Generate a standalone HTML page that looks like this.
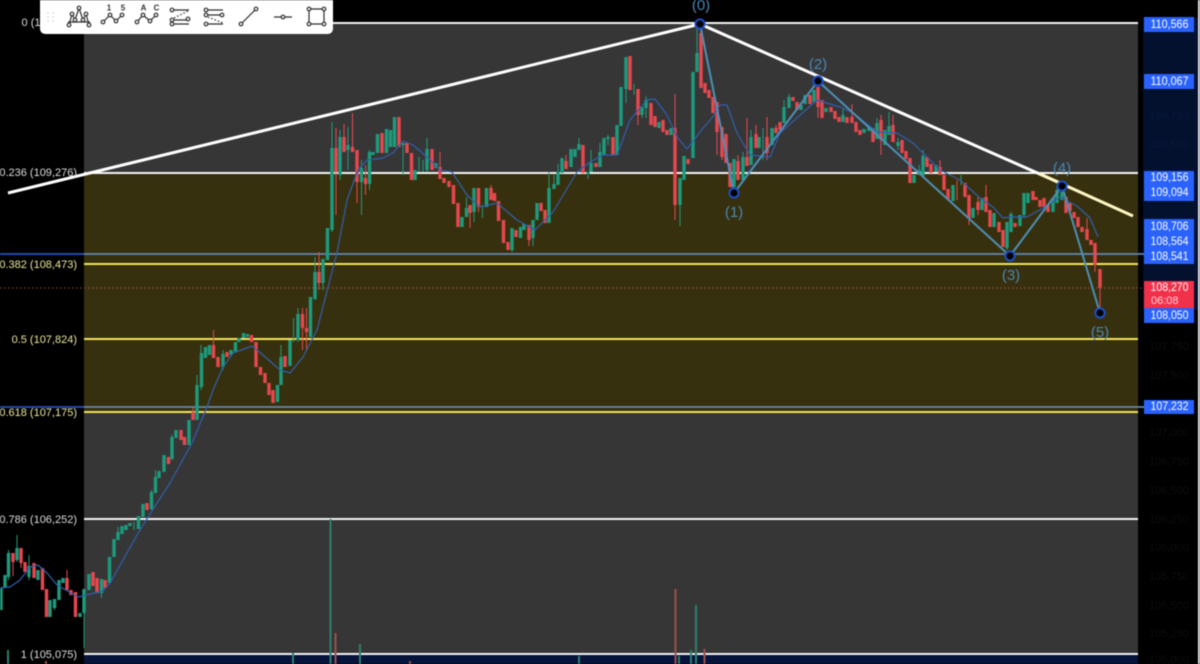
<!DOCTYPE html>
<html><head><meta charset="utf-8"><title>Chart</title>
<style>
html,body{margin:0;padding:0;background:#000;width:1200px;height:664px;overflow:hidden}
svg{display:block;filter:blur(.4px)}
text{font-family:"Liberation Sans",sans-serif}
</style></head><body>
<svg width="1200" height="664" viewBox="0 0 1200 664" xmlns="http://www.w3.org/2000/svg">
<rect width="1200" height="664" fill="#000"/>
<rect x="84" y="23" width="1054" height="632" fill="#363636"/>
<rect x="84" y="173" width="1054" height="239" fill="#37300f"/>
<rect x="84" y="655" width="1054" height="9" fill="#06133a"/>
<rect x="1143" y="18" width="55" height="292" fill="#03102e"/>
<rect x="1198" y="0" width="2" height="664" fill="#e4e4e4"/>

<!-- faint axis labels -->
<g font-size="11" fill="#0d0d0d" text-anchor="middle">
<text x="1169" y="119" fill="#0a1a3c">109,750</text><text x="1169" y="148" fill="#0a1a3c">109,500</text><text x="1169" y="350">107,750</text><text x="1169" y="379">107,500</text><text x="1169" y="436">107,000</text><text x="1169" y="465">106,750</text><text x="1169" y="494">106,500</text><text x="1169" y="523">106,250</text><text x="1169" y="551">106,000</text><text x="1169" y="580">105,750</text><text x="1169" y="609">105,500</text><text x="1169" y="637">105,250</text><text x="1169" y="663">105,000</text>
</g>

<!-- fib lines -->
<g stroke-width="2">
<path d="M84 23H1138M84 173H1138M84 519H1138M84 654H1138" stroke="#f4f4f4"/>
<path d="M84 264H1138M84 339H1138M84 412H1138" stroke="#f3e45c"/>
</g>
<path d="M0 254H84M0 407H84" stroke="#1f49b0" stroke-width="2"/>
<path d="M84 254H1144M84 407H1144" stroke="#6488b4" stroke-width="1.7"/>
<path d="M0 288H1144" stroke="#a3502f" stroke-width="1" stroke-dasharray="1.5 2.5"/>

<!-- volume -->
<g stroke-width="2" fill="none">
<path d="M330.5 519V664M293 653V664M360 644V664M579 656V664M696 605V664M691 650V664M679 656V664M8 650V664" stroke="#2f7f6e"/>
<path d="M335.5 633V664M410 661V664M675.5 589V664M704.5 649V664M46 661V664" stroke="#9c4f4f"/>
</g>

<!-- wicks green -->
<path fill="none" stroke="#1f9a7c" stroke-width="1" d="M8.5 550V580M17 535V562M29 555V580M54.5 599V610M84 589V648M101.5 579V598M118 527V540M134 522V530M151.5 490V510M155.5 470V493M172 435V460M197 375V420M201 345V390M223 350V370M281 345V385M293.5 318V342M298 308V342M315 257V300M323 259V290M332 122V232M340 130V180M348 127V170M361.5 160V215M369.5 150V190M403 143V175M419 157V172M423 160V172M427 138V172M466.5 197V217M474 188V222M482.5 205V218M486.5 188V207M512 228V252M533 220V246M549 172V223M554 175V189M558 164V185M579 138V150M588 172V179M591 150V172M600 143V167M608 135V145M626 57V103M634 84V95M642 107V118M646 96V118M680 178V226M684 156V180M697 25V72M743 152V180M751 130V165M763 128V160M784 100V123M789 94V108M843 108V122M877 118V139M889 112V135M898 138V150M919 165V175M923 150V176M961 175V185M1007 222V250M1011 212V232M1024 193V218M1057 185V203"/>
<!-- wicks red -->
<path fill="none" stroke="#e8474f" stroke-width="1" d="M13 553V576M21 548V568M67 570V590M193 408V420M213.5 330V358M302.5 308V350M306.5 308V350M319 252V290M336 128V215M344 124V152M352.5 113V152M357 150V203M365.5 165V195M440 152V179M458 203V227M470 205V228M478.5 188V212M491 185V200M529 225V246M566 155V169M638 89V125M675 94V220M701 25V88M717 102V155M722 127V160M738 155V180M747 118V166M756 125V148M767 117V160M776 125V133M818 87V118M852 104V123M881 115V155M893 115V142M940 160V175M957 180V200M978 197V215M986 185V212M1087 218V240M1095 243V272M1100 269V310M969 195V225"/>
<!-- bodies green -->
<path fill="none" stroke="#1c9b7d" stroke-width="3.4" d="M1 588V610M5 575V588M8.5 553V577M17 548V560M29 566V577M38 570V580M50 600V617M54.5 599V608M59 580V600M63 578V583M80 613V617M84 589V613M89 574V590M101.5 579V593M109.5 557V583M114 539V557M118 532V540M122 526V534M126 525V530M130 523V526M138.5 516V529M143 504V517M151.5 492V509M155.5 477V493M159 471V478M164 455V472M172 437V459M176 430V438M189 420V445M197 385V420M201.5 353V387M205.5 347V358M209.5 345V355M223 354V367M231 350V355M235.5 342V352M239 338V342M243.5 333V338M247.5 334V337M277.5 385V402M281 357V385M290 340V366M298 314V340M310.5 297V337M315 272V299M323 259V283M327.5 228V260M332 148V230M340 137V175M348 145V150M361.5 168V182M369.5 152V184M373 152V155M377.5 134V153M386.5 129V153M390.5 130V147M394.5 117V147M403 143V145M415 170V180M427 149V170M436 163V168M462 217V227M466.5 208V217M474 188V212M486.5 188V207M512 228V250M520.5 227V238M524 224V230M533 220V238M537 203V220M549 188V223M554 184V189M558 172V185M562 158V173M571 149V167M575 149V157M579 144V150M588 172V174M591 163V172M600 152V167M604 138V155M608 137V139M617 125V155M621 87V126M626 57V89M642 107V115M646 100V108M659 122V128M671 128V135M680 178V205M684 156V180M693 72V158M697 53V72M734 159V187M743 157V180M751 137V165M759 137V148M772 128V145M784 107V123M789 97V108M801 105V110M805 95V104M814 90V102M826 108V112M843 115V122M864 129V133M869 127V131M877 123V139M885 130V145M889 126V135M898 142V146M914 175V183M919 170V175M923 156V176M936 165V172M953 185V201M973 208V218M982 198V210M994 213V227M1007 222V248M1011 214V232M1020 215V226M1024 193V215M1028 193V203M1053 198V212M1057 190V203M1062 192V200"/>
<!-- bodies red -->
<path fill="none" stroke="#e8474f" stroke-width="3.4" d="M13 553V562M21 548V563M25 562V572M34 563V578M42.5 568V590M46.5 589V617M67 578V590M71 590V595M75.5 592V617M93 572V586M97 578V593M105 580V588M147 503V510M168.5 457V464M181 430V440M184.5 437V445M193 412V420M213.5 345V358M218 357V367M227 352V357M251.5 335V342M256 342V367M260.5 367V375M265 373V383M269 383V395M273 390V403M285 356V367M302.5 314V328M306.5 328V332M319 272V283M336 148V172M344 137V152M352.5 147V152M357 150V182M365.5 178V184M382 133V153M399 117V147M407 143V153M411.5 153V180M432 149V170M440 167V179M444 178V183M449 181V187M453.5 185V204M458 203V227M470 205V213M478.5 188V207M491 188V200M494.5 193V201M498.5 201V221M503.5 220V243M508 242V250M516 230V237M529 225V240M541 203V211M545 210V223M566 161V169M583 145V173M596 163V167M613 137V155M630 56V90M638 89V115M651 103V125M655 116V127M663 120V132M667 130V135M675 128V205M688 159V164M701 33V88M705 83V93M709 90V98M713 97V113M717 102V132M722 127V157M726 134V163M730 163V187M738 161V180M747 157V166M756 134V148M767 137V153M776 128V133M780 122V130M793 97V101M797 102V110M810 95V104M818 87V107M822 100V118M831 107V112M835 111V119M839 117V122M847 117V123M852 117V123M856 122V132M860 130V135M873 128V142M881 120V140M893 125V142M902 140V153M906 151V159M910 158V183M927 157V167M931 164V173M940 167V175M944 175V190M948 189V200M965 183V197M969 195V218M978 202V210M986 197V212M990 210V227M999 222V232M1003 230V247M1015 223V227M1033 191V200M1036 197V200M1040 200V207M1044 198V207M1048 205V212M1066 197V213M1070 203V211M1074 212V218M1078 217V227M1082 227V232M1087 229V240M1091 240V245M1095 243V265M1100 269V288"/>

<!-- moving average -->
<polyline fill="none" stroke="#2f5fae" stroke-width="1.2" stroke-linejoin="round" points="0,588 10,587 20,580 30,567 38,565 47,573 57,585 78,597 103,591 110,583 123,560 140,530 157,503 170,483 192,443 207,407 213,390 223,367 233,353 252,346 263,355 280,370 290,373 303,357 317,330 328,287 337,253 347,200 358,170 367,160 383,158 393,153 403,141 413,145 427,157 440,170 452,172 467,195 480,207 497,203 517,220 535,230 553,212 577,172 590,162 603,155 617,155 630,120 647,100 655,99 667,115 677,137 687,149 703,128 712,118 720,105 727,105 737,133 750,155 770,157 780,133 817,100 840,107 853,113 877,132 897,133 913,143 923,153 940,170 960,180 980,198 993,207 1003,218 1013,217 1027,217 1043,208 1060,197 1077,206 1090,218 1098,237"/>

<!-- trend lines -->
<path d="M8 193L700 24L1060 183" fill="none" stroke="#fff" stroke-width="3"/>
<path d="M1040 174L1133 216" fill="none" stroke="#fff6c4" stroke-width="3"/>

<!-- elliott wave -->
<polyline fill="none" stroke="#4d8fb6" stroke-width="2" stroke-linejoin="round" points="700,24 734,193 818,81 1010,256 1062,186 1100,313"/>
<g fill="#000" stroke="#1c4fc4" stroke-width="2">
<circle cx="700" cy="24" r="4.6"/><circle cx="734" cy="193" r="4.6"/><circle cx="818" cy="81" r="4.6"/><circle cx="1010" cy="256" r="4.6"/><circle cx="1062" cy="186" r="4.6"/><circle cx="1100" cy="313" r="4.6"/>
</g>
<g font-size="15" fill="#4a86b2" text-anchor="middle">
<text x="701" y="10">(0)</text><text x="734" y="217">(1)</text><text x="818" y="69">(2)</text><text x="1011" y="280">(3)</text><text x="1062" y="173">(4)</text><text x="1100" y="337">(5)</text>
</g>

<!-- left fib labels -->
<g font-size="11" text-anchor="end">
<text x="77" y="26" fill="#ddd">0 (110,566)</text>
<text x="77" y="176" fill="#ddd">0.236 (109,276)</text>
<text x="77" y="268" fill="#ece79a">0.382 (108,473)</text>
<text x="77" y="343" fill="#ece79a">0.5 (107,824)</text>
<text x="77" y="416" fill="#ece79a">0.618 (107,175)</text>
<text x="77" y="523" fill="#ddd">0.786 (106,252)</text>
<text x="77" y="658" fill="#ddd">1 (105,075)</text>
</g>

<!-- axis labels -->
<g fill="#2962ff">
<rect x="1144" y="17" width="50" height="15"/><rect x="1144" y="74" width="50" height="15"/><rect x="1144" y="171" width="50" height="30"/><rect x="1144" y="219" width="50" height="45"/><rect x="1144" y="308" width="50" height="15"/><rect x="1144" y="400" width="50" height="14"/>
</g>
<rect x="1144" y="281" width="50" height="27" fill="#f1304a"/>
<g font-size="11.5" fill="#fff" text-anchor="middle">
<text x="1169.5" y="28" textLength="38" lengthAdjust="spacingAndGlyphs">110,566</text><text x="1169.5" y="85" textLength="38" lengthAdjust="spacingAndGlyphs">110,067</text><text x="1169.5" y="181" textLength="38" lengthAdjust="spacingAndGlyphs">109,156</text><text x="1169.5" y="196" textLength="38" lengthAdjust="spacingAndGlyphs">109,094</text><text x="1169.5" y="230" textLength="38" lengthAdjust="spacingAndGlyphs">108,706</text><text x="1169.5" y="245" textLength="38" lengthAdjust="spacingAndGlyphs">108,564</text><text x="1169.5" y="260" textLength="38" lengthAdjust="spacingAndGlyphs">108,541</text><text x="1169.5" y="291" textLength="38" lengthAdjust="spacingAndGlyphs">108,270</text><text x="1169.5" y="319" textLength="38" lengthAdjust="spacingAndGlyphs">108,050</text><text x="1169.5" y="410" textLength="38" lengthAdjust="spacingAndGlyphs">107,232</text>
</g>
<text x="1151" y="304" font-size="11" fill="#ffd3d8">06:08</text>

<!-- toolbar -->
<path d="M40 0H333V28Q333 34 327 34H46Q40 34 40 28Z" fill="#fff"/>
<g fill="#ccc"><circle cx="48" cy="13" r=".8"/><circle cx="53" cy="13" r=".8"/><circle cx="48" cy="17" r=".8"/><circle cx="53" cy="17" r=".8"/><circle cx="48" cy="21" r=".8"/><circle cx="53" cy="21" r=".8"/></g>
<g fill="#fff" stroke="#2e2e2e" stroke-width="1.2">
<path fill="none" d="M69 25L72 14L75 20L79 8L83 20L86 14L89 25M68 22H90"/>
<circle cx="69" cy="25" r="1.8"/><circle cx="72" cy="14" r="1.8"/><circle cx="75" cy="20" r="1.8"/><circle cx="79" cy="8" r="1.8"/><circle cx="83" cy="20" r="1.8"/><circle cx="86" cy="14" r="1.8"/><circle cx="89" cy="25" r="1.8"/>
<path fill="none" d="M103 22L110 15L116 21L122 15"/>
<circle cx="103" cy="22" r="1.8"/><circle cx="110" cy="15" r="1.8"/><circle cx="116" cy="21" r="1.8"/><circle cx="122" cy="15" r="1.8"/>
<path fill="none" d="M137 22L143 15L150 21L156 15"/>
<circle cx="137" cy="22" r="1.8"/><circle cx="143" cy="15" r="1.8"/><circle cx="150" cy="21" r="1.8"/><circle cx="156" cy="15" r="1.8"/>
<path fill="none" d="M172 10H189M172 20H188M172 24H189"/>
<path fill="none" stroke-dasharray="1.5 2" d="M174 18L188 11"/>
<circle cx="172" cy="10" r="1.8"/><circle cx="172" cy="20" r="1.8"/><circle cx="188" cy="19" r="1.8"/><circle cx="172" cy="24" r="1.8"/>
<path fill="none" d="M206 10H223M206 15H222M206 24H223"/>
<path fill="none" stroke-dasharray="1.5 2" d="M208 17L223 23"/>
<circle cx="206" cy="10" r="1.8"/><circle cx="206" cy="15" r="1.8"/><circle cx="222" cy="15" r="1.8"/><circle cx="206" cy="24" r="1.8"/>
<path fill="none" d="M241 24L256 9"/>
<circle cx="241" cy="24" r="1.8"/><circle cx="256" cy="9" r="1.8"/>
<path fill="none" d="M274 17H292"/>
<circle cx="283" cy="17" r="1.8"/>
<path fill="none" d="M309 9H324V24H309Z"/>
<circle cx="309" cy="9" r="1.8"/><circle cx="324" cy="9" r="1.8"/><circle cx="309" cy="24" r="1.8"/><circle cx="324" cy="24" r="1.8"/>
</g>
<g font-size="8" font-weight="bold" fill="#333" text-anchor="middle">
<text x="109" y="10.5">1</text><text x="123" y="10.5">5</text><text x="143.5" y="10.5">A</text><text x="156.5" y="10.5">C</text>
</g>
</svg>
</body></html>
